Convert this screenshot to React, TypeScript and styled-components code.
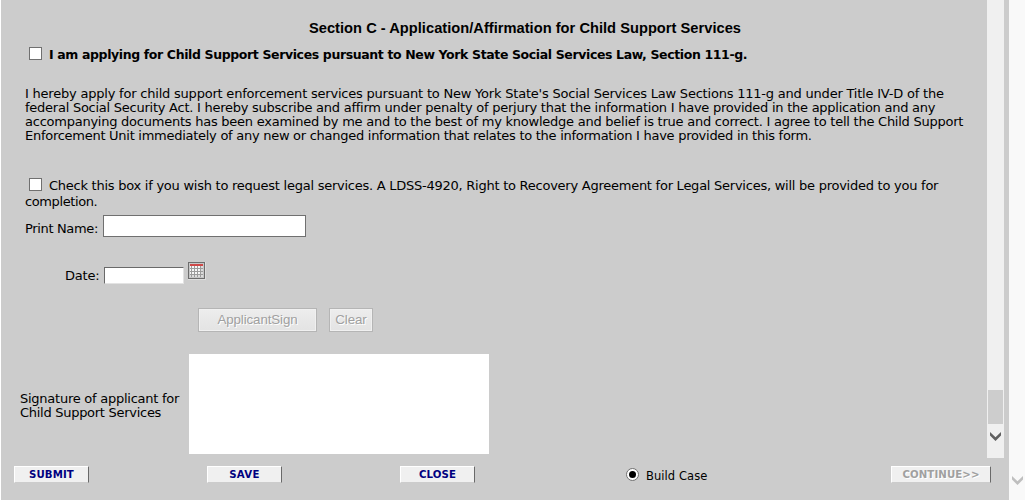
import React from "react";
import styled, { createGlobalStyle } from "styled-components";

const GlobalStyle = createGlobalStyle`
  * { box-sizing: border-box; }
  body { margin: 0; background: #fff; overflow: hidden; }
  svg { display: block; flex: none; }
`;

const Page = styled.div`
  display: flex;
  width: 1025px;
  height: 500px;
  padding-left: 1px;
  background: #fff;
  color: #000;
  font-family: "DejaVu Sans", Verdana, sans-serif;
  font-size: 13px;
  line-height: 14px;
`;

const Panel = styled.main`
  display: flex;
  flex-direction: column;
  width: 1008px;
  height: 500px;
  background: #ccc;
`;

const ScrollArea = styled.div`
  display: flex;
  height: 458px;
`;

const Form = styled.section`
  width: 986px;
  padding-top: 20px;
`;

const Heading = styled.h1`
  margin: 0 0 0 308px;
  height: 16px;
  font: bold 14.67px/16px "Liberation Sans", Arial, sans-serif;
  letter-spacing: 0.015px;
  white-space: nowrap;
`;

const Line = styled.div<{ $spacing?: number; $bold?: boolean }>`
  height: 14px;
  white-space: nowrap;
  letter-spacing: ${(p) => p.$spacing ?? -0.25}px;
  font-weight: ${(p) => (p.$bold ? "bold" : "normal")};
  font-size: ${(p) => (p.$bold ? 12.5 : 13)}px;
`;

const CheckRow = styled.label<{ $top: number }>`
  display: flex;
  gap: 7px;
  height: 14px;
  margin: ${(p) => p.$top}px 0 0 28px;
  ${Line} {
    margin-top: 1px;
  }
`;

const Checkbox = styled.input.attrs({ type: "checkbox" })`
  appearance: none;
  flex: none;
  width: 13px;
  height: 13px;
  margin: 0;
  border: 1px solid #707070;
  background: #fff;
`;

const Block = styled.div<{ $top: number; $left?: number }>`
  margin: ${(p) => p.$top}px 0 0 ${(p) => p.$left ?? 24}px;
`;

const FieldRow = styled.div<{ $top: number; $left: number }>`
  display: flex;
  height: 22px;
  margin: ${(p) => p.$top}px 0 0 ${(p) => p.$left}px;
`;

const FieldLabel = styled.label<{ $width: number; $top: number; $spacing?: number }>`
  width: ${(p) => p.$width}px;
  padding-top: ${(p) => p.$top}px;
  white-space: nowrap;
  letter-spacing: ${(p) => p.$spacing ?? 0}px;
`;

const NameInput = styled.input`
  width: 203px;
  height: 22px;
  padding: 0 2px;
  border: 1px solid #707070;
  background: #fff;
`;

const DateInput = styled.input`
  width: 80px;
  height: 17px;
  margin: 5px 4px 0 0;
  padding: 0 2px;
  border: 1px solid;
  border-color: #696969 #e3e3e3 #e3e3e3 #696969;
  background: #fff;
`;

const SignActions = styled.div`
  display: flex;
  gap: 12px;
  margin: 24px 0 0 197px;
`;

const SignButton = styled.button<{ $width: number }>`
  width: ${(p) => p.$width}px;
  height: 24px;
  padding: 0;
  border: 1px solid #b5b5b5;
  box-shadow: inset 0 0 0 1px #f0f0f0;
  background: linear-gradient(#ededed, #e3e3e3);
  color: #a0a0a0;
  text-shadow: 1px 1px 0 #fff;
  font: 13.33px/20px "Liberation Sans", Arial, sans-serif;
  letter-spacing: -0.1px;
  white-space: nowrap;
`;

const SignatureRow = styled.div`
  display: flex;
  margin: 22px 0 0 19px;
`;

const SignatureLabel = styled.div`
  width: 169px;
  padding-top: 38px;
`;

const SignaturePad = styled.div`
  width: 300px;
  height: 100px;
  background: #fff;
`;

const ScrollTrack = styled.div`
  display: flex;
  flex-direction: column;
  align-items: center;
  width: 17px;
  padding-top: 390px;
  background: #f0f0f0;
`;

const ScrollThumb = styled.div`
  width: 15px;
  height: 34px;
  margin-bottom: 8px;
  background: #cdcdcd;
`;

const PageScroll = styled.aside`
  width: 16px;
  padding: 476px 0 0 3px;
  background: #f9f9f9;
`;

const Footer = styled.footer`
  display: flex;
  padding: 8px 0 0 13px;
`;

const ActionButton = styled.button<{ $width?: number; $gap?: number; $spacing?: number }>`
  width: ${(p) => p.$width ?? 75}px;
  height: 17px;
  margin: 0 ${(p) => p.$gap ?? 0}px 0 0;
  padding: 1px 0 0;
  border: 1px solid;
  border-color: #fff #696969 #ccc #fff;
  background: #f0f0f0;
  color: #000080;
  font: bold 10.2px/14px "DejaVu Sans", Verdana, sans-serif;
  letter-spacing: ${(p) => p.$spacing ?? 0.1}px;
  white-space: nowrap;
  &:disabled {
    color: #a0a0a0;
    text-shadow: 1px 1px 0 #fff;
  }
`;

const RadioLabel = styled.label`
  display: flex;
  gap: 7px;
  width: 265px;
  padding-top: 2px;
  font-size: 11.5px;
  letter-spacing: 0.07px;
`;

const RadioText = styled.span`
  padding-top: 1px;
  white-space: nowrap;
`;

const Calendar = () => (
  <svg width="18" height="18" viewBox="0 0 18 18" shapeRendering="crispEdges">
    <rect width="18" height="18" fill="#dedede" />
    <rect width="17" height="17" fill="#6d6d6d" />
    <rect x="1" y="1" width="15" height="15" fill="#c6c6c6" />
    <rect x="2" y="4" width="13" height="11" fill="#9c9c9c" />
    <rect x="2" y="2" width="13" height="2" fill="#ce4848" />
    {[4, 7, 10, 13].map((y) =>
      [2, 4, 7, 10, 13].map((x) => (
        <rect
          key={`${x}-${y}`}
          x={x}
          y={y}
          width={x === 2 ? 1 : 2}
          height="2"
          fill={x === 13 || y === 13 ? "#dcdcdc" : "#f6f6f6"}
        />
      ))
    )}
  </svg>
);

const Chevron = ({ color }: { color: string }) => (
  <svg width="11" height="9" viewBox="0 0 11 9">
    <path d="M0 0L5.5 5.2L11 0V3.6L5.5 9L0 3.6Z" fill={color} />
  </svg>
);

const Radio = () => (
  <svg width="13" height="13" viewBox="0 0 13 13">
    <circle cx="6.5" cy="6.5" r="6" fill="#fff" stroke="#707070" />
    <circle cx="6.5" cy="6.5" r="3.5" fill="#000" />
  </svg>
);

export default function App() {
  return (
    <>
      <GlobalStyle />
      <Page>
        <Panel>
          <ScrollArea>
            <Form>
              <Heading>Section C - Application/Affirmation for Child Support Services</Heading>
              <CheckRow $top={11}>
                <Checkbox />
                <Line $bold $spacing={-0.375}>
                  I am applying for Child Support Services pursuant to New York State Social Services Law, Section 111-g.
                </Line>
              </CheckRow>
              <Block $top={26}>
                <Line $spacing={-0.21}>I hereby apply for child support enforcement services pursuant to New York State's Social Services Law Sections 111-g and under Title IV-D of the</Line>
                <Line>federal Social Security Act. I hereby subscribe and affirm under penalty of perjury that the information I have provided in the application and any</Line>
                <Line $spacing={-0.243}>accompanying documents has been examined by me and to the best of my knowledge and belief is true and correct. I agree to tell the Child Support</Line>
                <Line $spacing={-0.27}>Enforcement Unit immediately of any new or changed information that relates to the information I have provided in this form.</Line>
              </Block>
              <CheckRow $top={35}>
                <Checkbox />
                <Line>Check this box if you wish to request legal services. A LDSS-4920, Right to Recovery Agreement for Legal Services, will be provided to you for</Line>
              </CheckRow>
              <Block $top={3}>
                <Line $spacing={-0.4}>completion.</Line>
              </Block>
              <FieldRow $top={6} $left={24}>
                <FieldLabel $width={78} $top={7} $spacing={-0.35}>Print Name:</FieldLabel>
                <NameInput />
              </FieldRow>
              <FieldRow $top={25} $left={64}>
                <FieldLabel $width={39} $top={7} $spacing={-0.2}>Date:</FieldLabel>
                <DateInput />
                <Calendar />
              </FieldRow>
              <SignActions>
                <SignButton $width={119} disabled>ApplicantSign</SignButton>
                <SignButton $width={44} disabled>Clear</SignButton>
              </SignActions>
              <SignatureRow>
                <SignatureLabel>
                  <Line>Signature of applicant for</Line>
                  <Line $spacing={-0.28}>Child Support Services</Line>
                </SignatureLabel>
                <SignaturePad />
              </SignatureRow>
            </Form>
            <ScrollTrack>
              <ScrollThumb />
              <Chevron color="#606060" />
            </ScrollTrack>
          </ScrollArea>
          <Footer>
            <ActionButton $gap={118}>SUBMIT</ActionButton>
            <ActionButton $gap={118} $spacing={0.3}>SAVE</ActionButton>
            <ActionButton $gap={151}>CLOSE</ActionButton>
            <RadioLabel>
              <Radio />
              <RadioText>Build Case</RadioText>
            </RadioLabel>
            <ActionButton $width={100} disabled>CONTINUE&gt;&gt;</ActionButton>
          </Footer>
        </Panel>
        <PageScroll>
          <Chevron color="#bfbfbf" />
        </PageScroll>
      </Page>
    </>
  );
}
